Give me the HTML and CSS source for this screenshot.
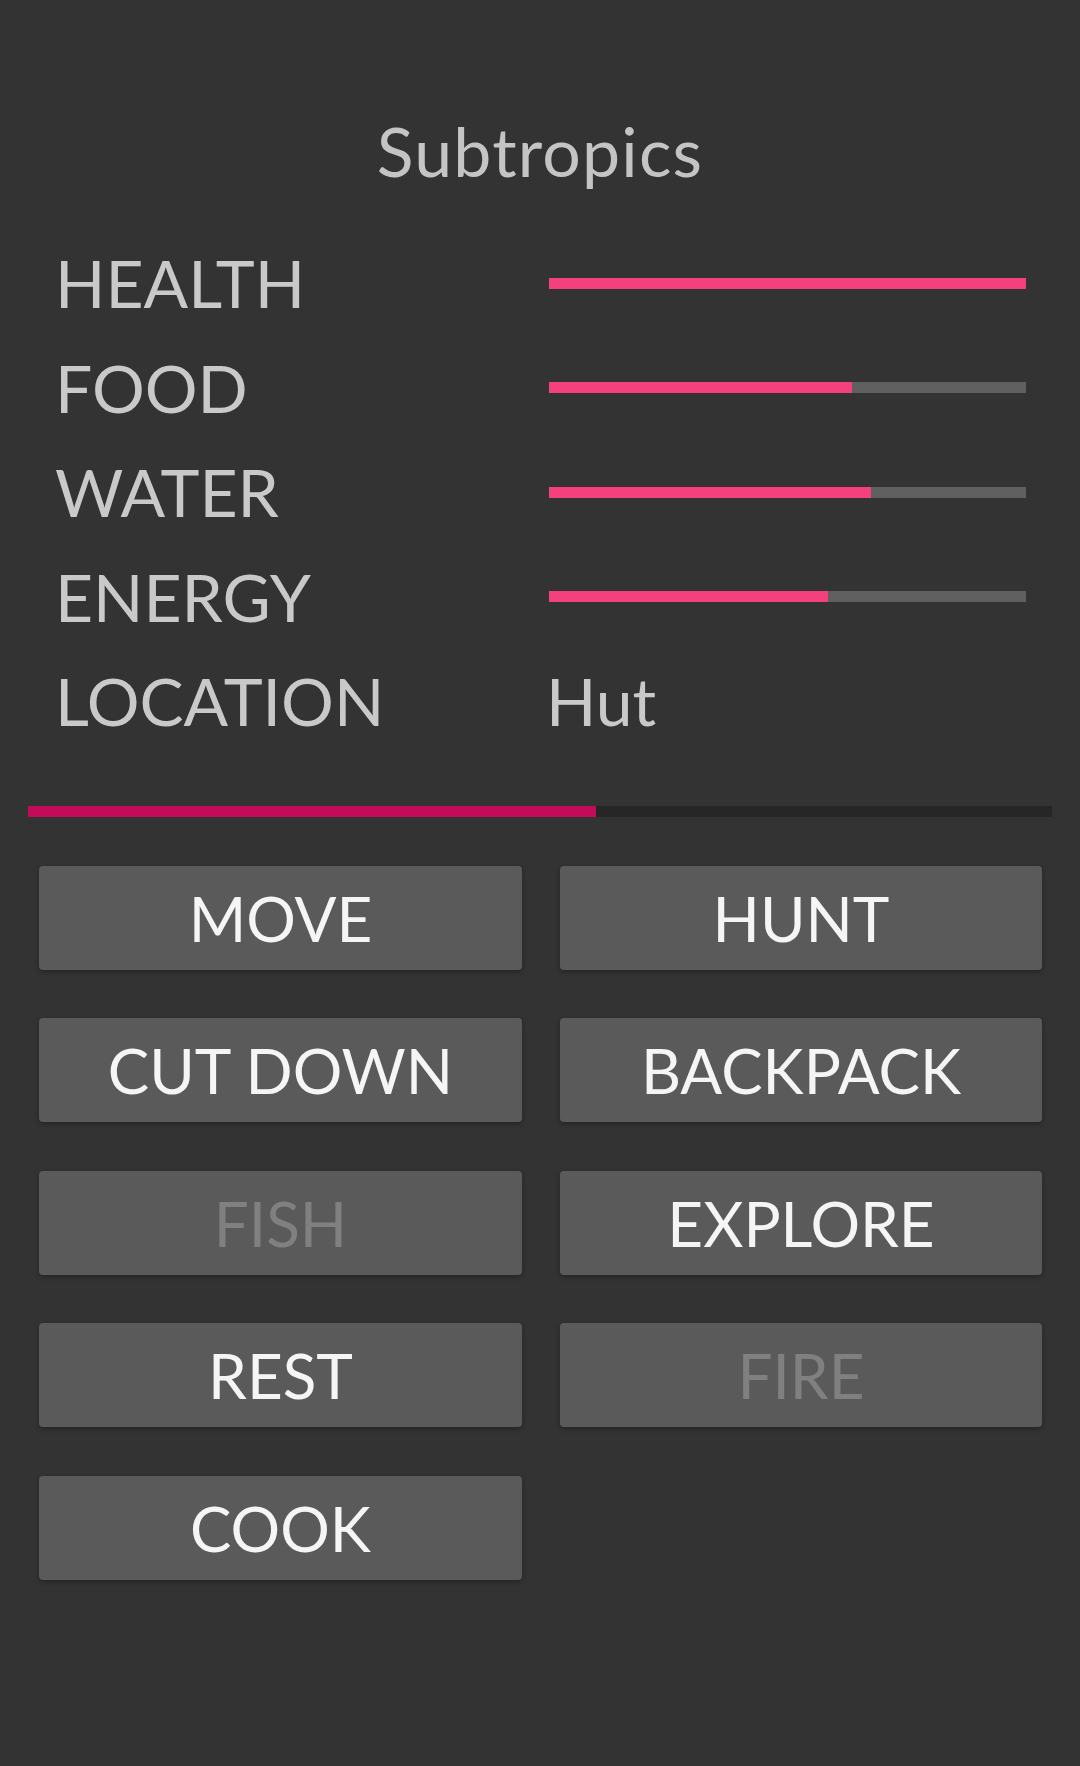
FILE: index.html
```html
<!DOCTYPE html>
<html>
<head>
<meta charset="utf-8">
<link rel="stylesheet" href="styles.css">
</head>
<body>
<div class="screen">
  <h1 class="title">Subtropics</h1>
  <div class="stats">
    <div class="stat"><span class="label">HEALTH</span><div class="bar"><div class="fill" style="width:100%"></div></div></div>
    <div class="stat"><span class="label">FOOD</span><div class="bar"><div class="fill" style="width:63.5%"></div></div></div>
    <div class="stat"><span class="label">WATER</span><div class="bar"><div class="fill" style="width:67.5%"></div></div></div>
    <div class="stat"><span class="label">ENERGY</span><div class="bar"><div class="fill" style="width:58.5%"></div></div></div>
    <div class="stat"><span class="label">LOCATION</span><span class="value">Hut</span></div>
  </div>
  <div class="progress"><div class="progress-fill" style="width:55.5%"></div></div>
  <div class="actions">
    <button class="btn">MOVE</button>
    <button class="btn">HUNT</button>
    <button class="btn">CUT DOWN</button>
    <button class="btn">BACKPACK</button>
    <button class="btn disabled">FISH</button>
    <button class="btn">EXPLORE</button>
    <button class="btn">REST</button>
    <button class="btn disabled">FIRE</button>
    <button class="btn">COOK</button>
  </div>
</div>
</body>
</html>
```
FILE: styles.css
```css
html, body {
  margin: 0;
  padding: 0;
  background: #333333;
}
body {
  font-family: Lato, "Open Sans", sans-serif;
  width: 1080px;
  height: 1766px;
  overflow: hidden;
}
.screen {
  display: flex;
  flex-direction: column;
  padding-top: 111px;
}
.title {
  margin: 0;
  font-weight: 400;
  font-size: 68px;
  line-height: 80px;
  height: 80px;
  letter-spacing: 1.2px;
  text-align: center;
  color: #c4c4c4;
}
.stats {
  margin-top: 40px;
  display: flex;
  flex-direction: column;
  padding-left: 55px;
}
.stat {
  display: grid;
  grid-template-columns: 494px 477px;
  align-items: center;
  height: 104.5px;
}
.label, .value {
  font-size: 66px;
  line-height: 66px;
  color: #c9c9c9;
}
.value {
  margin-left: -3px;
}
.bar {
  height: 11px;
  background: #606060;
  display: flex;
}
.fill {
  background: #f4417e;
  height: 100%;
}
.progress {
  margin: 52px 28px 0 28px;
  height: 11px;
  background: #262626;
  display: flex;
}
.progress-fill {
  background: #c40b5a;
  height: 100%;
}
.actions {
  margin-top: 49px;
  padding: 0 38px 0 39px;
  display: grid;
  grid-template-columns: 483px 482px;
  grid-auto-rows: 104px;
  column-gap: 38px;
  row-gap: 48.5px;
}
.btn {
  font-family: Lato, "Open Sans", sans-serif;
  font-size: 62px;
  line-height: 1;
  color: #f5f5f5;
  background: #5a5a5a;
  border: none;
  border-radius: 4px;
  box-shadow: 0 2px 5px rgba(0, 0, 0, 0.3);
  padding: 0;
  margin: 0;
  display: flex;
  align-items: center;
  justify-content: center;
}
.btn.disabled {
  color: #808080;
}
```
